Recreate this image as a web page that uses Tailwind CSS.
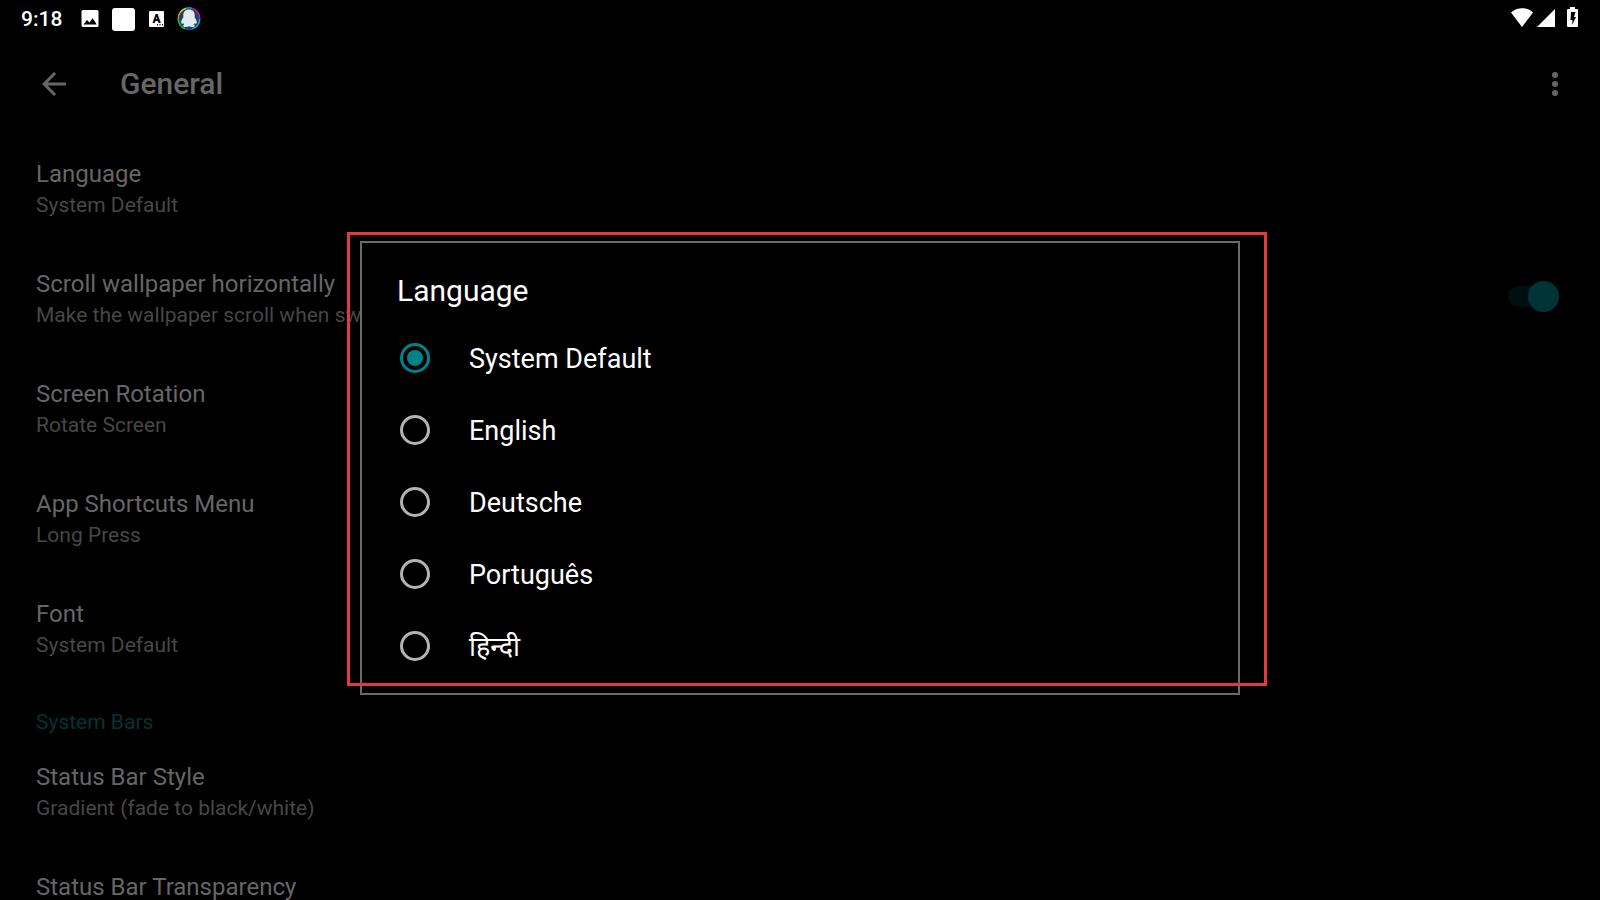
<!DOCTYPE html>
<html lang="en">
<head>
    <meta charset="UTF-8">
    <meta name="viewport" content="width=device-width, initial-scale=1.0">
    <title>General</title>
    <script src="https://cdn.jsdelivr.net/npm/@tailwindcss/browser@4"></script>
</head>
<body class="h-screen overflow-hidden bg-black font-[Roboto,'Noto_Sans',sans-serif] text-white">

    <!-- Status bar -->
    <div class="flex h-9 items-start justify-between px-[21px]">
        <div class="flex items-center pt-px">
            <span class="w-[60px] text-[21px] leading-9 font-medium">9:18</span>
            <svg class="h-[18px] w-[18px]" viewBox="0 0 18 18">
                <path fill="#fff" d="M2 0h14a1.500 1.500 0 0 1 1.500 1.500v14a1.500 1.500 0 0 1-1.500 1.500H2A1.500 1.500 0 0 1 .5 15.500V1.500A1.500 1.500 0 0 1 2 0z"/>
                <path fill="#000" d="M2.500 14.500l3.500-4.500 2.500 2.600 3.200-4.400 4 6.300z"/>
            </svg>
            <span class="ml-[13px] h-[23px] w-[23px] rounded-[3px] bg-white"></span>
            <span class="relative ml-[14px] flex h-4 w-[15px] justify-center rounded-[1px] bg-white text-[12px] leading-4 font-black text-black">A
                <svg class="absolute right-px bottom-px h-[2px] w-[6px]" viewBox="0 0 6 2"><path fill="#000" d="M0 0h1v1.5H0zM2.5 0h1v1.5h-1zM5 0h1v1.5H5z"/></svg>
            </span>
            <svg class="ml-[13px] h-6 w-6" viewBox="0 0 24 24">
                <circle cx="12" cy="11.500" r="11" fill="#174564"/>
                <g fill="none" stroke-width="1.5">
                    <path stroke="#e6c619" d="M3 5.500A11 11 0 0 1 9 1.200"/>
                    <path stroke="#1c8fd0" d="M9 1.200A11 11 0 0 1 15 1.200"/>
                    <path stroke="#c4179b" d="M15 1.200A11 11 0 0 1 22.800 12"/>
                    <path stroke="#18a5dc" d="M22.800 12A11 11 0 0 1 15 22"/>
                    <path stroke="#164a8c" d="M15 22A11 11 0 0 1 8 21.800"/>
                    <path stroke="#1fc03c" d="M8 21.800A11 11 0 0 1 1.200 12"/>
                    <path stroke="#e87c16" d="M1.200 12A11 11 0 0 1 3 5.500"/>
                </g>
                <path fill="#e6eaf0" d="M12 2.500C8 2.500 6.300 5.200 6.300 8v2.500C4.700 12.500 3.900 14.500 4.300 16.300c.2.800 1.200.6 2-.4.200.6.500 1.200 1 1.700-1.700.6-1.300 2.100-.1 2.300 1.700.3 3.400.1 4.800-.6 1.400.7 3.100.9 4.800.6 1.200-.2 1.600-1.700-.1-2.300.5-.5.800-1.100 1-1.700.8 1 1.800 1.200 2 .4.400-1.800-.4-3.800-2-5.800V8C17.700 5.200 16 2.500 12 2.500z"/>
            </svg>
        </div>
        <svg class="mt-1.5 h-6 w-[70px]" viewBox="0 0 70 24" fill="#fff">
            <path d="M2 6.500C8 .8 18 .8 24 6.500L13 21z"/>
            <path d="M28 21L46 3v18z"/>
            <path fill-rule="evenodd" d="M61 1h5v2h2q1 0 1 1v16q0 1-1 1h-9q-1 0-1-1V4q0-1 1-1h2zM62 6l-.5 8h2l-.5 5 4-8h-2l1.500-5z"/>
        </svg>
    </div>

    <!-- App bar -->
    <header class="flex h-24 items-center pl-9 pr-[27px] text-[#666]">
        <button type="button" aria-label="Back" class="mr-12">
            <svg class="h-9 w-9" viewBox="0 0 24 24" fill="currentColor"><path d="M20 11H7.830l5.590-5.590L12 4l-8 8 8 8 1.410-1.410L7.830 13H20v-2z"/></svg>
        </button>
        <h1 class="flex-1 text-[30px] leading-9 font-medium">General</h1>
        <button type="button" aria-label="More options">
            <svg class="h-9 w-9" viewBox="0 0 24 24" fill="currentColor"><circle cx="12" cy="6" r="2"/><circle cx="12" cy="12" r="2"/><circle cx="12" cy="18" r="2"/></svg>
        </button>
    </header>

    <!-- Preferences -->
    <main class="pt-[2px] text-[21px] leading-[30px] text-[#474747]">
        <section class="px-9 py-6">
            <h2 class="text-2xl leading-8 text-[#666]">Language</h2>
            <p>System Default</p>
        </section>
        <label class="flex justify-between py-6 pl-9 pr-[41px]">
            <span>
                <span class="block text-2xl leading-8 text-[#666]">Scroll wallpaper horizontally</span>
                <span class="block">Make the wallpaper scroll when switching screens</span>
            </span>
            <input type="checkbox" role="switch" checked class="mt-[13px] flex h-[31px] w-[51px] appearance-none items-center before:h-[21px] before:w-[36px] before:rounded-l-full before:bg-[#001010] after:-ml-4 after:h-[31px] after:w-[31px] after:shrink-0 after:rounded-full after:bg-[#003436]">
        </label>
        <section class="px-9 py-6">
            <h2 class="text-2xl leading-8 text-[#666]">Screen Rotation</h2>
            <p>Rotate Screen</p>
        </section>
        <section class="px-9 py-6">
            <h2 class="text-2xl leading-8 text-[#666]">App Shortcuts Menu</h2>
            <p>Long Press</p>
        </section>
        <section class="px-9 py-6">
            <h2 class="text-2xl leading-8 text-[#666]">Font</h2>
            <p>System Default</p>
        </section>
        <h3 class="px-9 pt-[23px] text-[#003436]">System Bars</h3>
        <section class="px-9 py-6">
            <h2 class="text-2xl leading-8 text-[#666]">Status Bar Style</h2>
            <p>Gradient (fade to black/white)</p>
        </section>
        <section class="px-9 pt-6">
            <h2 class="text-2xl leading-8 text-[#666]">Status Bar Transparency</h2>
        </section>
    </main>

    <!-- Language dialog -->
    <div class="fixed inset-0 top-9 flex items-center justify-center">
        <div role="dialog" aria-labelledby="dialog-title" class="relative w-[55%] border-2 border-[#6a6a6a] bg-black pt-[30px] pb-[11px]">
            <h2 id="dialog-title" class="px-[35px] pb-[13px] text-[30px] leading-9">Language</h2>
            <div class="text-[27px] leading-9">
                <label class="flex h-[72px] items-center gap-[39px] px-[38px]">
                    <input type="radio" name="language" checked class="grid h-[30px] w-[30px] appearance-none place-items-center rounded-full border-3 border-[#b3b3b3] checked:border-[#008388] checked:before:h-4 checked:before:w-4 checked:before:rounded-full checked:before:bg-[#008388]">
                    <span class="pt-[2px]">System Default</span>
                </label>
                <label class="flex h-[72px] items-center gap-[39px] px-[38px]">
                    <input type="radio" name="language" class="h-[30px] w-[30px] appearance-none rounded-full border-3 border-[#b3b3b3]">
                    <span class="pt-[2px]">English</span>
                </label>
                <label class="flex h-[72px] items-center gap-[39px] px-[38px]">
                    <input type="radio" name="language" class="h-[30px] w-[30px] appearance-none rounded-full border-3 border-[#b3b3b3]">
                    <span class="pt-[2px]">Deutsche</span>
                </label>
                <label class="flex h-[72px] items-center gap-[39px] px-[38px]">
                    <input type="radio" name="language" class="h-[30px] w-[30px] appearance-none rounded-full border-3 border-[#b3b3b3]">
                    <span class="pt-[2px]">Português</span>
                </label>
                <label class="flex h-[72px] items-center gap-[39px] px-[38px]">
                    <input type="radio" name="language" class="h-[30px] w-[30px] appearance-none rounded-full border-3 border-[#b3b3b3]">
                    <span lang="hi" class="pt-[2px]">हिन्दी</span>
                </label>
            </div>
            <!-- Highlight frame -->
            <div class="pointer-events-none absolute -top-[11px] -right-[29px] bottom-[7px] -left-[15px] border-3 border-[#e53a3a]"></div>
        </div>
    </div>

</body>
</html>
